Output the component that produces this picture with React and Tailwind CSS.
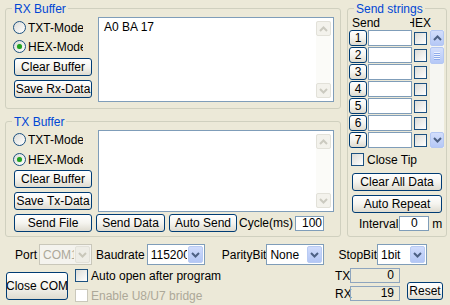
import React from 'react'

function Chevron({ up = false, color = '#4d6185' }) {
  return (
    <svg width="9" height="6" viewBox="0 0 9 6">
      <polyline
        points={up ? '1,5 4.5,1.5 8,5' : '1,1 4.5,4.5 8,1'}
        fill="none"
        stroke={color}
        strokeWidth="2"
      />
    </svg>
  )
}

function Btn({ className = '', children }) {
  return (
    <div
      className={`flex shrink-0 items-center justify-center overflow-hidden whitespace-nowrap rounded-[3px] border border-[#003c74] bg-linear-to-b from-[#ffffff] via-[#f5f4ef] to-[#dedbd0] leading-none ${className}`}
    >
      {children}
    </div>
  )
}

function Radio({ checked, label }) {
  return (
    <div className="flex h-[13px] items-center">
      <div className="flex h-[13px] w-[13px] shrink-0 items-center justify-center rounded-full border border-[#1c5180] bg-linear-to-br from-[#dcdcd7] to-white">
        {checked && <div className="h-[5px] w-[5px] rounded-full bg-[#21a121] shadow-[0_0_1px_#7ed27e]" />}
      </div>
      <div className="ml-[2px] w-[55px] overflow-hidden whitespace-nowrap">{label}</div>
    </div>
  )
}

function Check({ label, disabled = false, className = '' }) {
  return (
    <div className={`flex h-[13px] items-center ${className}`}>
      <div
        className={`h-[13px] w-[13px] shrink-0 border ${
          disabled ? 'border-[#cac8bb] bg-white' : 'border-[#1c5180] bg-linear-to-br from-[#dcdcd7] to-white'
        }`}
      />
      {label && (
        <span className={`ml-[3px] whitespace-nowrap ${disabled ? 'text-[#aca899]' : ''}`}>{label}</span>
      )}
    </div>
  )
}

function ScrollOff() {
  return (
    <div className="my-[3px] mr-[2px] flex w-[15px] shrink-0 flex-col bg-[#fbfbf8]">
      <div className="flex h-[15px] items-center justify-center rounded-[2px] border border-[#e2e1d9] bg-[#f3f2ec]">
        <Chevron up color="#cbcac0" />
      </div>
      <div className="flex-1" />
      <div className="flex h-[15px] items-center justify-center rounded-[2px] border border-[#e2e1d9] bg-[#f3f2ec]">
        <Chevron color="#cbcac0" />
      </div>
    </div>
  )
}

function Memo({ className = '', text }) {
  return (
    <div className={`flex w-[236px] border border-[#7f9db9] bg-white ${className}`}>
      <div className="flex-1 pl-[5px] pt-[2px] whitespace-nowrap">{text}</div>
      <ScrollOff />
    </div>
  )
}

function Combo({ value, className = '', disabled = false }) {
  return (
    <div
      className={`flex h-[21px] shrink-0 border ${
        disabled ? 'border-[#c9c7ba] bg-[#f4f3ee]' : 'border-[#7f9db9] bg-white'
      } ${className}`}
    >
      <div
        className={`flex flex-1 items-center overflow-hidden whitespace-nowrap pl-[3px] ${
          disabled ? 'text-[#aca899]' : ''
        }`}
      >
        {value}
      </div>
      <div
        className={`m-[1px] flex w-[15px] shrink-0 items-center justify-center rounded-[2px] border ${
          disabled
            ? 'border-[#e2e1d9] bg-[#eeede6]'
            : 'border-[#b9cbf3] bg-linear-to-b from-[#d0dcfc] to-[#b3c6f5]'
        }`}
      >
        <Chevron color={disabled ? '#c9c7ba' : '#4d6185'} />
      </div>
    </div>
  )
}

function Group({ title, className = '', titleClass = 'ml-[6px]', children }) {
  return (
    <div className={`rounded-[3px] border border-[#d0d0bf] ${className}`}>
      <div className={`-mt-[7px] h-[14px] w-fit bg-[#ece9d8] px-[2px] text-[#0046d5] ${titleClass}`}>{title}</div>
      {children}
    </div>
  )
}

function Grip() {
  return (
    <div className="flex flex-col gap-[1px]">
      {[0, 1, 2, 3].map((i) => (
        <div key={i} className="h-[1px] w-[6px] bg-[#eef3fe] shadow-[0_1px_0_#8eaaea]" />
      ))}
    </div>
  )
}

export default function App() {
  const rows = [1, 2, 3, 4, 5, 6, 7]
  return (
    <div className="h-[305px] w-[450px] overflow-hidden bg-[#ece9d8] font-['Liberation_Sans',Arial,sans-serif] text-[12px] leading-[14px] text-black">
      <div className="flex pl-[5px] pt-[8px]">
        <div className="flex w-[336px] flex-col">
          <Group title="RX Buffer" className="h-[101px]">
            <div className="flex pl-[7px]">
              <div className="flex w-[85px] flex-col pt-[5px]">
                <Radio label="TXT-Mode" />
                <div className="mt-[6px]">
                  <Radio checked label="HEX-Mode" />
                </div>
                <Btn className="ml-[1px] mt-[5px] h-[18px] w-[78px]">Clear Buffer</Btn>
                <Btn className="ml-[1px] mt-[4px] h-[18px] w-[78px]">Save Rx-Data</Btn>
              </div>
              <Memo className="mt-[1px] h-[85px]" text="A0 BA 17" />
            </div>
          </Group>

          <Group title="TX Buffer" className="mt-[12px] h-[116px]">
            <div className="flex pl-[7px]">
              <div className="flex w-[85px] flex-col pt-[4px]">
                <Radio label="TXT-Mode" />
                <div className="mt-[7px]">
                  <Radio checked label="HEX-Mode" />
                </div>
                <Btn className="ml-[1px] mt-[4px] h-[18px] w-[78px]">Clear Buffer</Btn>
                <Btn className="ml-[1px] mt-[4px] h-[18px] w-[78px]">Save Tx-Data</Btn>
              </div>
              <Memo className="mt-[1px] h-[82px]" />
            </div>
            <div className="mt-[2px] flex items-start pl-[8px]">
              <Btn className="h-[18px] w-[78px]">Send File</Btn>
              <Btn className="ml-[4px] h-[18px] w-[69px]">Send Data</Btn>
              <Btn className="ml-[4px] h-[18px] w-[68px]">Auto Send</Btn>
              <span className="ml-[2px] mt-[2px] whitespace-nowrap">Cycle(ms)</span>
              <div className="ml-[2px] mt-[2px] h-[15px] w-[29px] border border-[#7f9db9] bg-white pr-[1px] text-right leading-[13px]">
                100
              </div>
            </div>
          </Group>
        </div>

        <Group title="Send strings" className="ml-[6px] h-[229px] w-[100px]">
          <div className="flex h-[14px] pl-[4px]">
            <span>Send</span>
            <div className="ml-[30px] flex w-[21px] justify-end overflow-hidden">
              <span>HEX</span>
            </div>
          </div>
          <div className="flex">
            <div className="flex flex-col gap-[1px] pl-[1px]">
              {rows.map((n) => (
                <div key={n} className="flex h-[16px] items-center">
                  <Btn className="h-[16px] w-[18px]">{n}</Btn>
                  <div className="ml-[1px] h-[16px] w-[44px] border border-[#7f9db9] bg-white" />
                  <Check className="ml-[2px]" />
                </div>
              ))}
            </div>
            <div className="ml-[3px] flex h-[118px] w-[14px] flex-col bg-[#f6f6f2]">
              <div className="flex h-[16px] items-center justify-center rounded-[2px] border border-[#b4c7f2] bg-linear-to-b from-[#d3defc] to-[#b5c8f6]">
                <Chevron up />
              </div>
              <div className="mt-[1px] flex h-[17px] items-center justify-center rounded-[2px] border border-[#b4c7f2] bg-linear-to-b from-[#d3defc] to-[#b5c8f6]">
                <Grip />
              </div>
              <div className="flex-1" />
              <div className="flex h-[16px] items-center justify-center rounded-[2px] border border-[#b4c7f2] bg-linear-to-b from-[#d3defc] to-[#b5c8f6]">
                <Chevron />
              </div>
            </div>
          </div>
          <Check className="ml-[3px] mt-[5px]" label="Close Tip" />
          <Btn className="ml-[4px] mt-[7px] h-[18px] w-[90px]">Clear All Data</Btn>
          <Btn className="ml-[4px] mt-[4px] h-[18px] w-[90px]">Auto Repeat</Btn>
          <div className="mt-[3px] flex h-[15px] items-center">
            <span className="ml-[11px] whitespace-nowrap">Interval</span>
            <div className="ml-[1px] h-[15px] w-[30px] border border-[#7f9db9] bg-white text-center leading-[13px]">0</div>
            <span className="ml-[3px]">m</span>
          </div>
        </Group>
      </div>

      <div className="mt-[7px] flex h-[21px] items-center pl-[15px]">
        <span>Port</span>
        <Combo className="ml-[2px] w-[53px]" value="COM1" disabled />
        <span className="ml-[4px]">Baudrate</span>
        <Combo className="ml-[2px] w-[58px]" value="115200" />
        <span className="ml-[17px]">ParityBit</span>
        <Combo className="w-[58px]" value="None" />
        <span className="ml-[14px]">StopBit</span>
        <Combo className="w-[50px]" value="1bit" />
      </div>

      <div className="flex items-start">
        <Btn className="ml-[6px] mt-[7px] h-[28px] w-[62px]">Close COM</Btn>
        <div className="ml-[7px] mt-[4px] flex w-[260px] flex-col">
          <Check label="Auto open after program" />
          <Check className="mt-[7px]" label="Enable U8/U7 bridge" disabled />
        </div>
        <div className="mt-[3px] flex flex-col">
          <div className="flex h-[15px] items-center">
            <span className="w-[15px] text-right">TX</span>
            <div className="h-[15px] w-[50px] border border-[#8ea5be] pr-[5px] text-right leading-[13px]">0</div>
          </div>
          <div className="mt-[3px] flex h-[15px] items-center">
            <span className="w-[15px] text-right">RX</span>
            <div className="h-[15px] w-[50px] border border-[#8ea5be] pr-[5px] text-right leading-[13px]">19</div>
          </div>
        </div>
        <Btn className="ml-[7px] mt-[17px] h-[18px] w-[36px]">Reset</Btn>
      </div>
    </div>
  )
}
